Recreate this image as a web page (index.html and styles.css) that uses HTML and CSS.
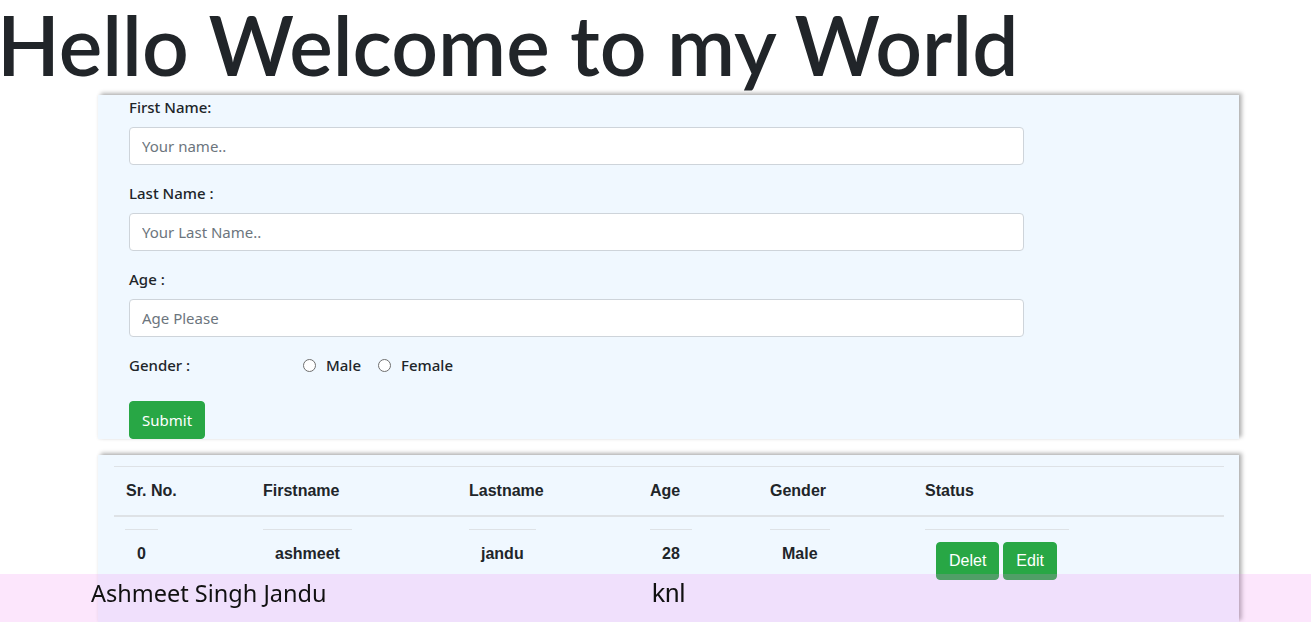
FILE: index.html
```html
<!DOCTYPE html>
<html lang="en">
<head>
<meta charset="utf-8">
<title>Hello Welcome to my World</title>
<link rel="stylesheet" href="styles.css">
</head>
<body>
<h1 class="title">Hello Welcome to my World</h1>

<div class="card form-card">
  <form class="form">
    <div class="group">
      <label class="label" for="fname">First Name:</label>
      <input class="control" id="fname" type="text" placeholder="Your name..">
    </div>
    <div class="group">
      <label class="label" for="lname">Last Name :</label>
      <input class="control" id="lname" type="text" placeholder="Your Last Name..">
    </div>
    <div class="group">
      <label class="label" for="age">Age :</label>
      <input class="control" id="age" type="text" placeholder="Age Please">
    </div>
    <div class="gender-row">
      <span class="gender-label">Gender :</span>
      <label class="radio"><input class="radio-input" type="radio" name="g"><span>Male</span></label>
      <label class="radio"><input class="radio-input" type="radio" name="g"><span>Female</span></label>
    </div>
    <button class="btn btn-success submit" type="button">Submit</button>
  </form>
</div>

<div class="card table-card">
  <table class="table">
    <colgroup>
      <col class="c1"><col class="c2"><col class="c3"><col class="c4"><col class="c5"><col class="c6">
    </colgroup>
    <thead>
      <tr>
        <th>Sr. No.</th>
        <th>Firstname</th>
        <th>Lastname</th>
        <th>Age</th>
        <th>Gender</th>
        <th>Status</th>
      </tr>
    </thead>
    <tbody>
      <tr>
        <td><span class="cell">0</span></td>
        <td><span class="cell">ashmeet</span></td>
        <td><span class="cell">jandu</span></td>
        <td><span class="cell">28</span></td>
        <td><span class="cell">Male</span></td>
        <td><span class="cell status"><button class="btn btn-success act" type="button">Delet</button><button class="btn btn-success act" type="button">Edit</button></span></td>
      </tr>
    </tbody>
  </table>
</div>

<footer class="footer">
  <span class="footer-name">Ashmeet Singh Jandu</span>
  <span class="footer-place">knl</span>
</footer>
</body>
</html>
```

FILE: styles.css
```css
html, body {
  margin: 0;
  padding: 0;
  overflow: hidden;
}

body {
  font-family: "Noto Sans", "Open Sans", sans-serif;
  color: #212529;
  background: #fff;
}

.title {
  margin: 0 0 0 -3px;
  height: 95px;
  font-family: Lato, "Noto Sans", sans-serif;
  font-size: 82px;
  line-height: 88px;
  font-weight: 600;
  color: #212529;
  white-space: nowrap;
}

.card {
  margin-left: 98px;
  width: 1141px;
  box-sizing: border-box;
  background: #f0f8ff;
  box-shadow: 3px -2px 4px rgba(0, 0, 0, 0.28), 0 0 3px rgba(0, 0, 0, 0.08);
}

.form-card {
  padding: 0 0 0 31px;
}

.form {
  margin: 0;
}

.group {
  margin-bottom: 16px;
}

.label {
  display: block;
  margin-bottom: 8px;
  font-size: 15px;
  line-height: 24px;
  font-weight: 500;
}

.control {
  display: block;
  box-sizing: border-box;
  width: 895px;
  height: 38px;
  padding: 6px 12px;
  font-family: inherit;
  font-size: 15px;
  color: #495057;
  background: #fff;
  border: 1px solid #ced4da;
  border-radius: 4px;
  outline: none;
}

.control::placeholder {
  color: #6c757d;
}

.gender-row {
  display: flex;
  align-items: center;
  height: 24px;
  margin-bottom: 24px;
  font-size: 15px;
  font-weight: 500;
}

.gender-label {
  width: 174px;
}

.radio {
  display: flex;
  align-items: center;
  gap: 10px;
  margin-right: 17px;
}

.radio-input {
  appearance: none;
  -webkit-appearance: none;
  margin: 0;
  width: 13px;
  height: 13px;
  box-sizing: border-box;
  border: 1px solid #6f6f6f;
  border-radius: 50%;
  background: #fff;
}

.btn {
  display: inline-block;
  box-sizing: border-box;
  height: 38px;
  padding: 6px 12px;
  border: 1px solid transparent;
  border-radius: 4px;
  color: #fff;
  cursor: pointer;
}

.btn-success {
  background: #28a745;
  border-color: #28a745;
}

.submit {
  display: block;
  width: 76px;
  font-family: inherit;
  font-size: 15px;
}

.table-card {
  margin-top: 16px;
  padding: 11px 15px 18px 16px;
}

.table {
  width: 1110px;
  border-collapse: collapse;
  font-family: "Liberation Sans", Arial, sans-serif;
  font-weight: bold;
  font-size: 16px;
  color: #212529;
}

.c1 { width: 137px; }
.c2 { width: 206px; }
.c3 { width: 181px; }
.c4 { width: 120px; }
.c5 { width: 155px; }
.c6 { width: 311px; }

.table th {
  padding: 12px;
  line-height: 24px;
  text-align: left;
  border-top: 1px solid #dee2e6;
  border-bottom: 2px solid #dee2e6;
}

.table td {
  padding: 12px 12px 12px 12px;
  line-height: 24px;
  vertical-align: top;
}

.table td:first-child {
  padding-left: 11px;
}

.cell {
  display: inline-block;
  padding: 12px;
  border-top: 1px solid #dee2e6;
}

.status {
  display: inline-flex;
  gap: 4px;
  width: 121px;
  padding-left: 11px;
}

.act {
  font-family: "Liberation Sans", Arial, sans-serif;
  font-size: 16px;
  font-weight: normal;
  line-height: 24px;
}

.footer {
  position: fixed;
  left: 0;
  right: 0;
  bottom: 0;
  height: 48px;
  padding-left: 91px;
  display: grid;
  grid-template-columns: 561px auto;
  align-items: start;
  line-height: 38px;
  background: rgba(238, 130, 238, 0.2);
  color: #111;
}

.footer-name {
  font-family: "Noto Sans", "Open Sans", sans-serif;
  font-size: 23.5px;
}

.footer-place {
  font-family: "Liberation Sans", Arial, sans-serif;
  font-size: 26px;
}
```
